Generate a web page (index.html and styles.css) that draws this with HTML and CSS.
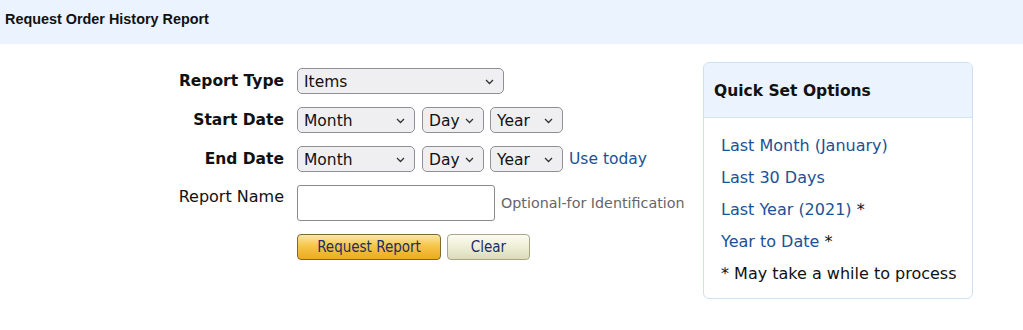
FILE: index.html
```html
<html>
<head>
    <link rel="stylesheet" href="styles.css">
</head>
<body>
<div class='titlebar'>Request Order History Report</div>
<div id='main'>
    <div class='form'>
        <div class='label strong'>Report Type</div>
        <div class='controls'>
            <div class='select wide'>Items<svg class='chev' width="9" height="6" viewBox="0 0 9 6"><path d="M1 1l3.5 3.5L8 1" fill="none" stroke="#333" stroke-width="1.3"/></svg></div>
        </div>

        <div class='label strong'>Start Date</div>
        <div class='controls'>
            <div class='select month'>Month<svg class='chev' width="9" height="6" viewBox="0 0 9 6"><path d="M1 1l3.5 3.5L8 1" fill="none" stroke="#333" stroke-width="1.3"/></svg></div>
            <div class='select day'>Day<svg class='chev' width="9" height="6" viewBox="0 0 9 6"><path d="M1 1l3.5 3.5L8 1" fill="none" stroke="#333" stroke-width="1.3"/></svg></div>
            <div class='select year'>Year<svg class='chev' width="9" height="6" viewBox="0 0 9 6"><path d="M1 1l3.5 3.5L8 1" fill="none" stroke="#333" stroke-width="1.3"/></svg></div>
        </div>

        <div class='label strong'>End Date</div>
        <div class='controls'>
            <div class='select month'>Month<svg class='chev' width="9" height="6" viewBox="0 0 9 6"><path d="M1 1l3.5 3.5L8 1" fill="none" stroke="#333" stroke-width="1.3"/></svg></div>
            <div class='select day'>Day<svg class='chev' width="9" height="6" viewBox="0 0 9 6"><path d="M1 1l3.5 3.5L8 1" fill="none" stroke="#333" stroke-width="1.3"/></svg></div>
            <div class='select year'>Year<svg class='chev' width="9" height="6" viewBox="0 0 9 6"><path d="M1 1l3.5 3.5L8 1" fill="none" stroke="#333" stroke-width="1.3"/></svg></div>
            <a class='link'>Use today</a>
        </div>

        <div class='label top'>Report Name</div>
        <div class='controls'>
            <input class='name' type='text'>
            <span class='hint'>Optional-for Identification</span>
        </div>

        <div></div>
        <div class='controls'>
            <button class='btn primary'>Request Report</button>
            <button class='btn plain'>Clear</button>
        </div>
    </div>

    <div class='quickset'>
        <div class='qs-header'>Quick Set Options</div>
        <div class='qs-body'>
            <div><a class='link'>Last Month (January)</a></div>
            <div><a class='link'>Last 30 Days</a></div>
            <div><a class='link'>Last Year (2021)</a> *</div>
            <div><a class='link'>Year to Date</a> *</div>
            <div>* May take a while to process</div>
        </div>
    </div>
</div>
</body>
</html>
```

FILE: styles.css
```css
body {
    margin: 0;
    font-family: "DejaVu Sans", Verdana, sans-serif;
    font-size: 16px;
    color: #111;
    background: #fff;
}

.titlebar {
    height: 44px;
    background: #eaf3fe;
    font-family: "Liberation Sans", Arial, sans-serif;
    font-weight: bold;
    font-size: 14.4px;
    padding: 11px 0 0 5px;
    box-sizing: border-box;
}

#main {
    display: flex;
    padding: 18px 0 0 164px;
}

.form {
    display: grid;
    grid-template-columns: 120px auto;
    grid-auto-rows: min-content;
    column-gap: 13px;
    row-gap: 13px;
    width: 539px;
    margin-top: 6px;
}

.label {
    text-align: right;
    display: flex;
    align-items: center;
    justify-content: flex-end;
    white-space: nowrap;
}

.label.strong {
    font-weight: bold;
    font-size: 15.5px;
}

.label.top {
    align-items: flex-start;
    padding-top: 2px;
}

.controls {
    display: flex;
    align-items: center;
    gap: 6px;
}

.select {
    height: 26px;
    box-sizing: border-box;
    border: 1px solid #8f8f95;
    border-radius: 5px;
    background: #efeff2;
    display: flex;
    align-items: center;
    justify-content: space-between;
    padding: 1px 9px 0 6px;
    font-size: 15.5px;
}

.wide { width: 207px; }
.month { width: 118px; margin-right: 1px; }
.day { width: 62px; }
.year { width: 73px; }

.link {
    color: #1a5296;
    text-decoration: none;
}

.controls .link {
    font-size: 15.5px;
}

.name {
    width: 198px;
    height: 36px;
    box-sizing: border-box;
    border: 1px solid #8a8a8a;
    border-radius: 3px;
    margin: 0;
}

.hint {
    color: #666;
    font-size: 14.3px;
    white-space: nowrap;
}

.btn {
    height: 26px;
    border-radius: 4px;
    font-family: "DejaVu Sans Condensed", "DejaVu Sans", sans-serif;
    font-size: 15px;
    color: #1f2a66;
    padding: 0;
    margin: 0;
}

.primary {
    width: 144px;
    border: 1px solid #7f6a2c;
    background: linear-gradient(#fbe6a4, #f5c64a 45%, #eeaa1f);
}

.plain {
    width: 83px;
    border: 1px solid #a8a687;
    background: linear-gradient(#fbfbf1, #eeeed6 50%, #dcdbb9);
}

.quickset {
    width: 270px;
    height: 237px;
    box-sizing: border-box;
    border: 1px solid #cfe0f2;
    border-radius: 6px;
    overflow: hidden;
}

.qs-header {
    height: 55px;
    background: #eaf3fe;
    border-bottom: 1px solid #d5e4f4;
    box-sizing: border-box;
    font-weight: bold;
    font-size: 15.5px;
    line-height: 18px;
    padding: 19px 0 0 10px;
}

.qs-body {
    padding: 19px 0 0 17px;
    display: flex;
    flex-direction: column;
    gap: 14px;
    line-height: 18px;
}
```
